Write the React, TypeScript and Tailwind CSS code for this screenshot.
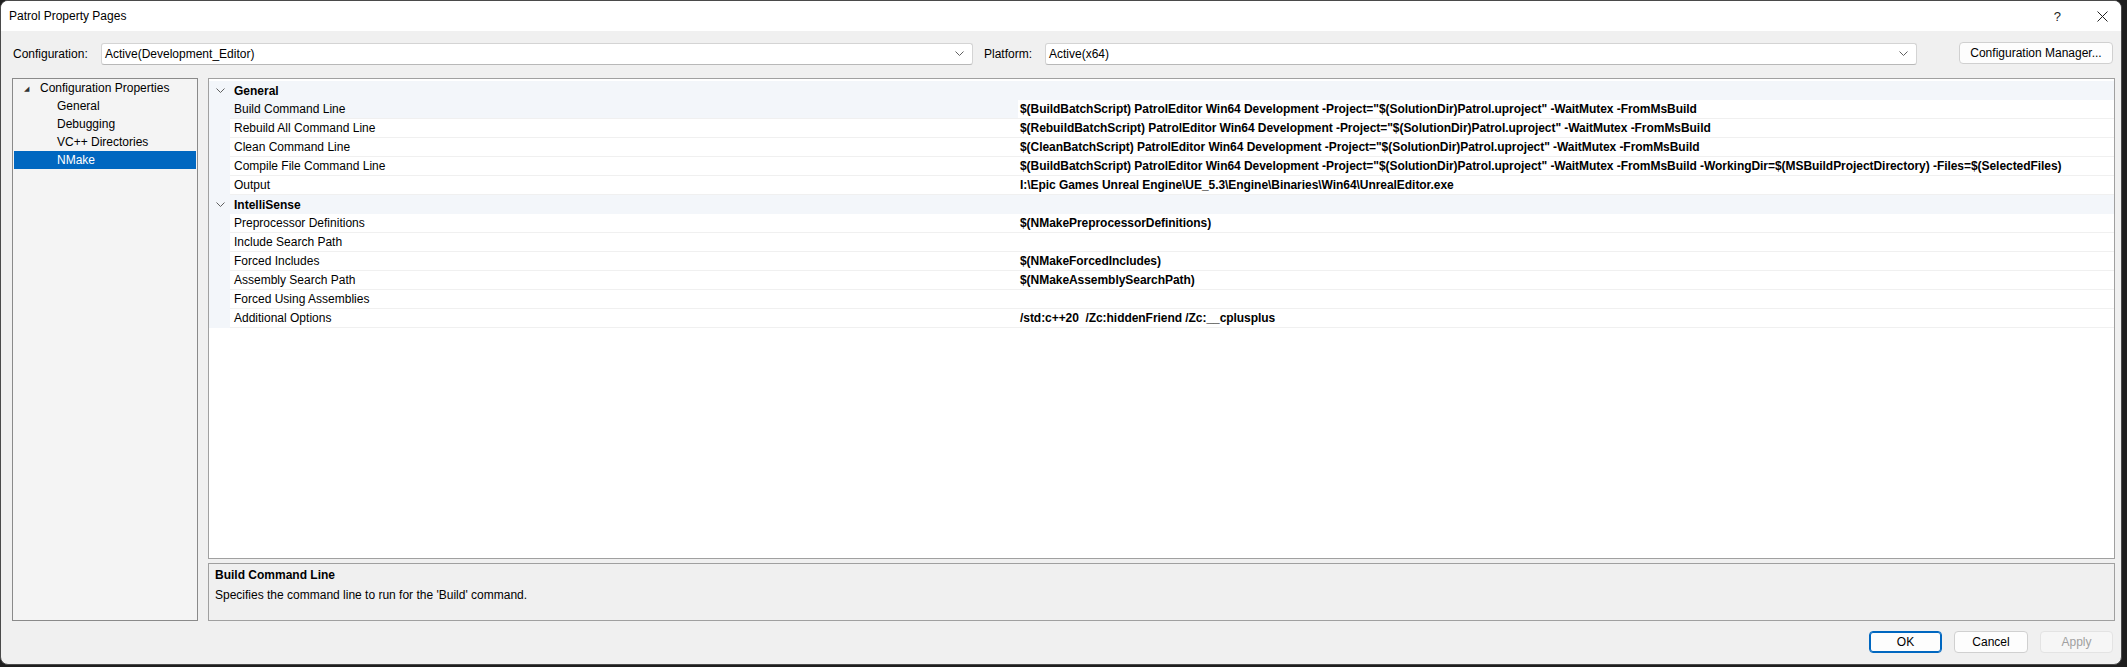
import React from "react";

const FONT = "font-['Liberation_Sans',Arial,sans-serif]";

const general: [string, string][] = [
  ["Build Command Line", "$(BuildBatchScript) PatrolEditor Win64 Development -Project=\"$(SolutionDir)Patrol.uproject\" -WaitMutex -FromMsBuild"],
  ["Rebuild All Command Line", "$(RebuildBatchScript) PatrolEditor Win64 Development -Project=\"$(SolutionDir)Patrol.uproject\" -WaitMutex -FromMsBuild"],
  ["Clean Command Line", "$(CleanBatchScript) PatrolEditor Win64 Development -Project=\"$(SolutionDir)Patrol.uproject\" -WaitMutex -FromMsBuild"],
  ["Compile File Command Line", "$(BuildBatchScript) PatrolEditor Win64 Development -Project=\"$(SolutionDir)Patrol.uproject\" -WaitMutex -FromMsBuild -WorkingDir=$(MSBuildProjectDirectory) -Files=$(SelectedFiles)"],
  ["Output", "I:\\Epic Games Unreal Engine\\UE_5.3\\Engine\\Binaries\\Win64\\UnrealEditor.exe"],
];

const intelli: [string, string][] = [
  ["Preprocessor Definitions", "$(NMakePreprocessorDefinitions)"],
  ["Include Search Path", ""],
  ["Forced Includes", "$(NMakeForcedIncludes)"],
  ["Assembly Search Path", "$(NMakeAssemblySearchPath)"],
  ["Forced Using Assemblies", ""],
  ["Additional Options", "/std:c++20  /Zc:hiddenFriend /Zc:__cplusplus"],
];

function Chevron({ className = "" }: { className?: string }) {
  return (
    <svg width="9" height="6" viewBox="0 0 9 6" className={className}>
      <polyline points="0.5,0.5 4.5,4.5 8.5,0.5" fill="none" stroke="#606060" strokeWidth="1" />
    </svg>
  );
}

function Combo({ text }: { text: string }) {
  return (
    <div className="flex h-[22px] w-[872px] items-center justify-between rounded-[3px] border border-[#d4d4d4] border-b-[#b8b8b8] bg-white pl-[3px] pr-[8px]">
      <span>{text}</span>
      <Chevron />
    </div>
  );
}

function Header({ title }: { title: string }) {
  return (
    <div className="flex h-[19px] items-center bg-[#f3f6fa]">
      <div className="flex w-[21px] items-center justify-center pl-[1px]">
        <Chevron />
      </div>
      <div className="pl-[4px] font-bold">{title}</div>
    </div>
  );
}

function Row({ name, value, selected }: { name: string; value: string; selected?: boolean }) {
  return (
    <div className="flex h-[19px]">
      <div className="w-[21px] shrink-0 bg-[#f3f6fa]" />
      <div
        className={`flex w-[788px] shrink-0 items-center border-b border-[#f0f0f0] pl-[4px] ${
          selected ? "bg-[#f3f6fa]" : "bg-white"
        }`}
      >
        {name}
      </div>
      <div className="flex flex-1 items-center whitespace-pre border-b border-[#f0f0f0] bg-white pl-[2px] font-bold tracking-[-0.05px]">
        {value}
      </div>
    </div>
  );
}

export default function App() {
  return (
    <div className={`h-[667px] w-[2127px] bg-[#1e1e1e] text-[12px] leading-none text-black ${FONT}`}>
      <div className="flex h-[665px] w-[2122px] flex-col overflow-hidden rounded-[8px] border border-[#4a4a4a] bg-[#f0f0f0]">
        {/* Title bar */}
        <div className="flex h-[30px] shrink-0 items-center justify-between bg-white pl-[8px] pr-[13px]">
          <span>Patrol Property Pages</span>
          <div className="flex items-center gap-[36px]">
            <span className="text-[13px] text-[#222]">?</span>
            <svg width="11" height="11" viewBox="0 0 11 11">
              <line x1="0.5" y1="0.5" x2="10.5" y2="10.5" stroke="#222" strokeWidth="1" />
              <line x1="10.5" y1="0.5" x2="0.5" y2="10.5" stroke="#222" strokeWidth="1" />
            </svg>
          </div>
        </div>

        {/* Body */}
        <div className="flex flex-1 flex-col pl-[11px] pr-[6px] pt-[12px]">
          {/* Config row */}
          <div className="flex h-[22px] items-center">
            <div className="w-[89px] pl-[1px]">Configuration:</div>
            <Combo text="Active(Development_Editor)" />
            <div className="ml-[11px] w-[61px]">Platform:</div>
            <Combo text="Active(x64)" />
            <button className="ml-[42px] -mt-[2px] h-[22px] w-[154px] rounded-[4px] border border-[#d0d0d0] bg-[#fdfdfd] text-center">
              Configuration Manager...
            </button>
          </div>

          {/* Main */}
          <div className="mt-[13px] flex h-[543px] gap-[10px]">
            {/* Tree */}
            <div className="w-[186px] shrink-0 border border-[#8a8a8a] bg-[#f4f4f4] p-[1px] pt-0">
              <div className="flex h-[18px] items-center">
                <span className="ml-[10px] w-[16px] text-[7px] text-[#333]">◢</span>
                <span>Configuration Properties</span>
              </div>
              {["General", "Debugging", "VC++ Directories"].map((t) => (
                <div key={t} className="flex h-[18px] items-center pl-[43px]">
                  {t}
                </div>
              ))}
              <div className="flex h-[18px] items-center bg-[#0067c0] pl-[43px] text-white">NMake</div>
            </div>

            {/* Right column */}
            <div className="flex flex-1 flex-col gap-[4px]">
              <div className="flex-1 border border-[#a0a0a0] bg-white pt-[2px]">
                <Header title="General" />
                {general.map(([n, v], i) => (
                  <Row key={n} name={n} value={v} selected={i === 0} />
                ))}
                <Header title="IntelliSense" />
                {intelli.map(([n, v]) => (
                  <Row key={n} name={n} value={v} />
                ))}
              </div>
              <div className="h-[58px] shrink-0 border border-[#a0a0a0] bg-[#f0f0f0] pl-[6px] pt-[5px]">
                <div className="flex h-[12px] items-center font-bold">Build Command Line</div>
                <div className="mt-[8px] flex h-[12px] items-center">
                  Specifies the command line to run for the 'Build' command.
                </div>
              </div>
            </div>
          </div>

          {/* Buttons */}
          <div className="mt-[10px] flex h-[22px] justify-end gap-[12px] pr-[2px]">
            <button className="h-[22px] w-[73px] rounded-[4px] border border-[#0067c0] bg-[#fdfdfd] shadow-[inset_0_0_0_1px_#0067c0]">
              OK
            </button>
            <button className="h-[22px] w-[74px] rounded-[4px] border border-[#d0d0d0] bg-[#fdfdfd]">Cancel</button>
            <button className="h-[22px] w-[73px] rounded-[4px] border border-[#e3e3e3] bg-[#f6f6f6] text-[#a0a0a0]">
              Apply
            </button>
          </div>
        </div>
      </div>
    </div>
  );
}
